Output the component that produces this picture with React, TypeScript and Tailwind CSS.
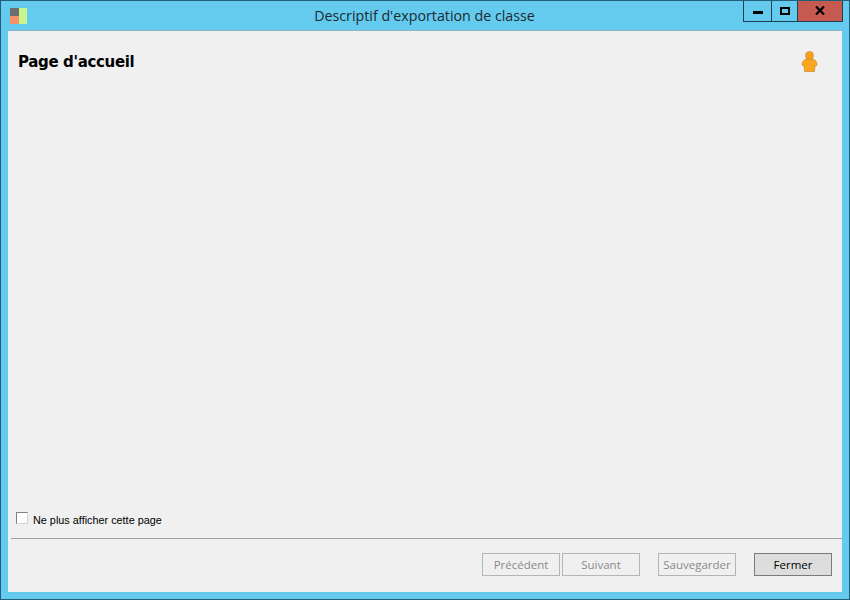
export default function App() {
  return (
    <div className="w-[850px] h-[600px] flex flex-col bg-[#64cbee] border border-[#1f5f7a] overflow-hidden" style={{ fontFamily: '"Open Sans", sans-serif' }}>
      <div className="h-[29px] flex shrink-0 relative">
        <svg className="absolute left-[9px] top-[6px]" width="17" height="17" viewBox="0 0 17 17">
          <rect x="0" y="1" width="9" height="8" fill="#6d6d6d" />
          <rect x="0" y="9" width="9" height="8" fill="#f79268" />
          <rect x="9" y="1" width="8" height="16" fill="#c9f58e" />
        </svg>
        <div className="flex-1 pr-[1px] text-center text-[14.25px] leading-[30px] text-[#1a2a30]">Descriptif d'exportation de classe</div>
        <div className="absolute right-[6px] top-[-1px] h-[22px] flex border border-t-0 border-[#1c3f52]">
          <div className="w-[28px] flex items-center justify-center border-r border-[#1c3f52]">
            <div className="w-[10px] h-[3px] mt-[4px] bg-black" />
          </div>
          <div className="w-[26px] flex items-center justify-center border-r border-[#1c3f52]">
            <div className="w-[10px] h-[8px] border-2 border-black" />
          </div>
          <div className="w-[44px] flex items-center justify-center bg-[#c75a50]">
            <svg width="10" height="9" viewBox="0 0 10 9">
              <path d="M1 0.5 L9 8.5 M9 0.5 L1 8.5" stroke="#000" strokeWidth="2.2" fill="none" />
            </svg>
          </div>
        </div>
      </div>
      <div className="ml-[7px] mr-[7px] h-[562px] bg-[#f0f0f0] border-t border-[#8fb5c6] flex flex-col">
        <div className="flex items-start justify-between pl-[10px] pr-[24px] pt-[20px]">
          <h1 className="text-[15px] leading-[22px] font-bold text-black" style={{ fontFamily: '"DejaVu Sans", sans-serif', letterSpacing: '-0.35px' }}>Page d'accueil</h1>
          <svg width="17" height="21" viewBox="0 0 17 21">
            <circle cx="8.5" cy="4.5" r="4" fill="#f9a21f" stroke="#c98a2a" strokeWidth="0.7" />
            <path d="M5 8 C2.5 9 1 11 1 13.5 C1 14.5 2 15 3.2 15 L3.5 20.5 L13.5 20.5 L13.8 15 C15 15 16 14.5 16 13.5 C16 11 14.5 9 12 8 Z" fill="#fba61f" stroke="#c98a2a" strokeWidth="0.7" />
          </svg>
        </div>
        <div className="flex-1" />
        <label className="flex items-center pl-[8px] text-[10.85px] leading-[14px] text-black" style={{ fontFamily: '"Liberation Sans", sans-serif' }}>
          <span className="w-[12px] h-[12px] mb-[4px] bg-white border border-[#d4d4d4] border-t-[#808080] border-l-[#808080] shrink-0 mr-[5px]" />
          Ne plus afficher cette page
        </label>
        <div className="mt-[10px] ml-[3px] h-px bg-[#a0a0a0]" />
        <div className="flex justify-end pt-[14px] pr-[10px] pb-[16px] text-[11.5px]">
          <button className="w-[78px] h-[23px] border border-[#b5b5b5] text-[#8a8a8a]">Précédent</button>
          <button className="w-[78px] h-[23px] ml-[2px] border border-[#b5b5b5] text-[#8a8a8a]">Suivant</button>
          <button className="w-[78px] h-[23px] ml-[18px] border border-[#b5b5b5] text-[#8a8a8a]">Sauvegarder</button>
          <button className="w-[78px] h-[23px] ml-[18px] border border-[#7a7a7a] bg-[#dddddd] text-black">Fermer</button>
        </div>
      </div>
    </div>
  );
}
